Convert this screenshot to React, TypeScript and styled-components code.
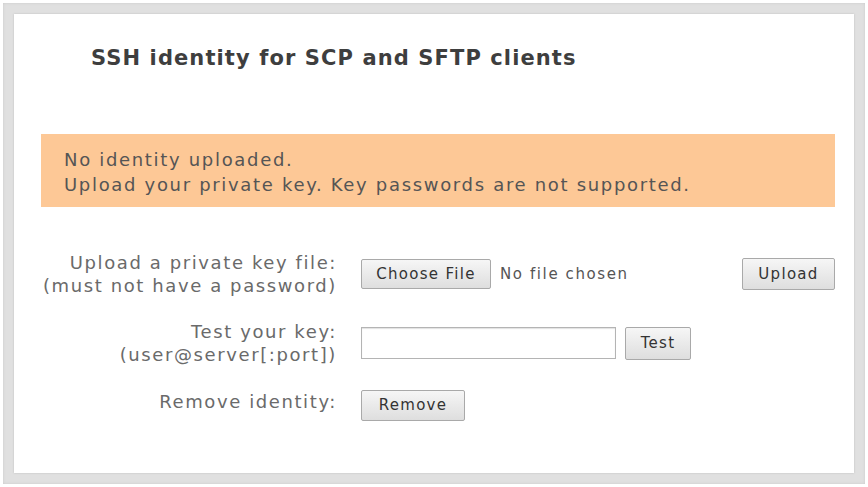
import * as React from "react";
import styled, { createGlobalStyle } from "styled-components";

const Global = createGlobalStyle`
	html, body {
		margin: 0;
		padding: 0;
		background: #ffffff;
	}
	body {
		font-family: "DejaVu Sans", Verdana, sans-serif;
	}
`;

const Frame = styled.div`
	width: 868px;
	height: 487px;
	box-sizing: border-box;
	padding: 3px;
	background: #ffffff;
`;

const Border = styled.div`
	height: 100%;
	box-sizing: border-box;
	padding: 11px;
	background: #e0e0e0;
	box-shadow: inset 0 0 3px #cacaca;
`;

const Panel = styled.div`
	height: 100%;
	box-sizing: border-box;
	background: #ffffff;
	box-shadow: 0 0 2px #bdbdbd;
	padding: 30px 19px 0 27px;
	display: flex;
	flex-direction: column;
`;

const Title = styled.h2`
	margin: 0 0 0 50px;
	font-size: 21px;
	letter-spacing: 1.1px;
	font-weight: bold;
	color: #3e3e3e;
	line-height: 28px;
`;

const Notice = styled.div`
	margin-top: 62px;
	background: #fdc896;
	color: #555555;
	font-size: 18px;
	letter-spacing: 1.68px;
	line-height: 25px;
	padding: 13px 23px 10px 23px;
`;

const Form = styled.div`
	margin-top: 42px;
	display: grid;
	grid-template-columns: 296px 1fr;
	column-gap: 24px;
`;

const Label = styled.div<{ $h: number; $lift?: number }>`
	height: ${(p) => p.$h}px;
	box-sizing: border-box;
	padding-bottom: ${(p) => p.$lift ?? 0}px;
	display: flex;
	flex-direction: column;
	justify-content: center;
	align-items: flex-end;
	text-align: right;
	color: #6a6a6a;
	font-size: 18px;
	letter-spacing: 1.6px;
	line-height: 23px;
	white-space: nowrap;
`;

const Controls = styled.div<{ $h: number; $spread?: boolean }>`
	height: ${(p) => p.$h}px;
	display: flex;
	align-items: center;
	gap: 9px;
	justify-content: ${(p) => (p.$spread ? "space-between" : "flex-start")};
`;

const Group = styled.div`
	display: flex;
	align-items: center;
	gap: 9px;
`;

const Button = styled.button<{ $w: number; $hh?: number }>`
	width: ${(p) => p.$w}px;
	height: ${(p) => p.$hh ?? 30}px;
	box-sizing: border-box;
	font-family: "DejaVu Sans", Verdana, sans-serif;
	font-size: 15px;
	letter-spacing: 1.3px;
	color: #333333;
	border: 1px solid #a9a9a9;
	border-radius: 2px;
	background: linear-gradient(#f6f6f6, #dedede);
	padding: 0;
	white-space: nowrap;
	cursor: pointer;
`;

const FileNote = styled.span`
	font-size: 15px;
	letter-spacing: 1.6px;
	color: #555555;
`;

const TextInput = styled.input`
	width: 255px;
	height: 32px;
	box-sizing: border-box;
	border: 1px solid #b4b4b4;
	box-shadow: inset 0 1px 1px #e2e2e2;
	padding: 0 4px;
	font-size: 14px;
`;

export default function App() {
	return (
		<>
			<Global />
			<Frame>
				<Border>
					<Panel>
						<Title>SSH identity for SCP and SFTP clients</Title>
						<Notice>
							No identity uploaded.
							<br />
							Upload your private key. Key passwords are not supported.
						</Notice>
						<Form>
							<Label $h={50}>
								<span>Upload a private key file:</span>
								<span>(must not have a password)</span>
							</Label>
							<Controls $h={50} $spread>
								<Group>
									<Button $w={130}>Choose File</Button>
									<FileNote>No file chosen</FileNote>
								</Group>
								<Button $w={93} $hh={32}>Upload</Button>
							</Controls>

							<Label $h={88}>
								<span>Test your key:</span>
								<span>(user@server[:port])</span>
							</Label>
							<Controls $h={88}>
								<TextInput type="text" />
								<Button $w={66} $hh={33}>Test</Button>
							</Controls>

							<Label $h={36} $lift={8}>
								<span>Remove identity:</span>
							</Label>
							<Controls $h={36}>
								<Button $w={104} $hh={31}>Remove</Button>
							</Controls>
						</Form>
					</Panel>
				</Border>
			</Frame>
		</>
	);
}
